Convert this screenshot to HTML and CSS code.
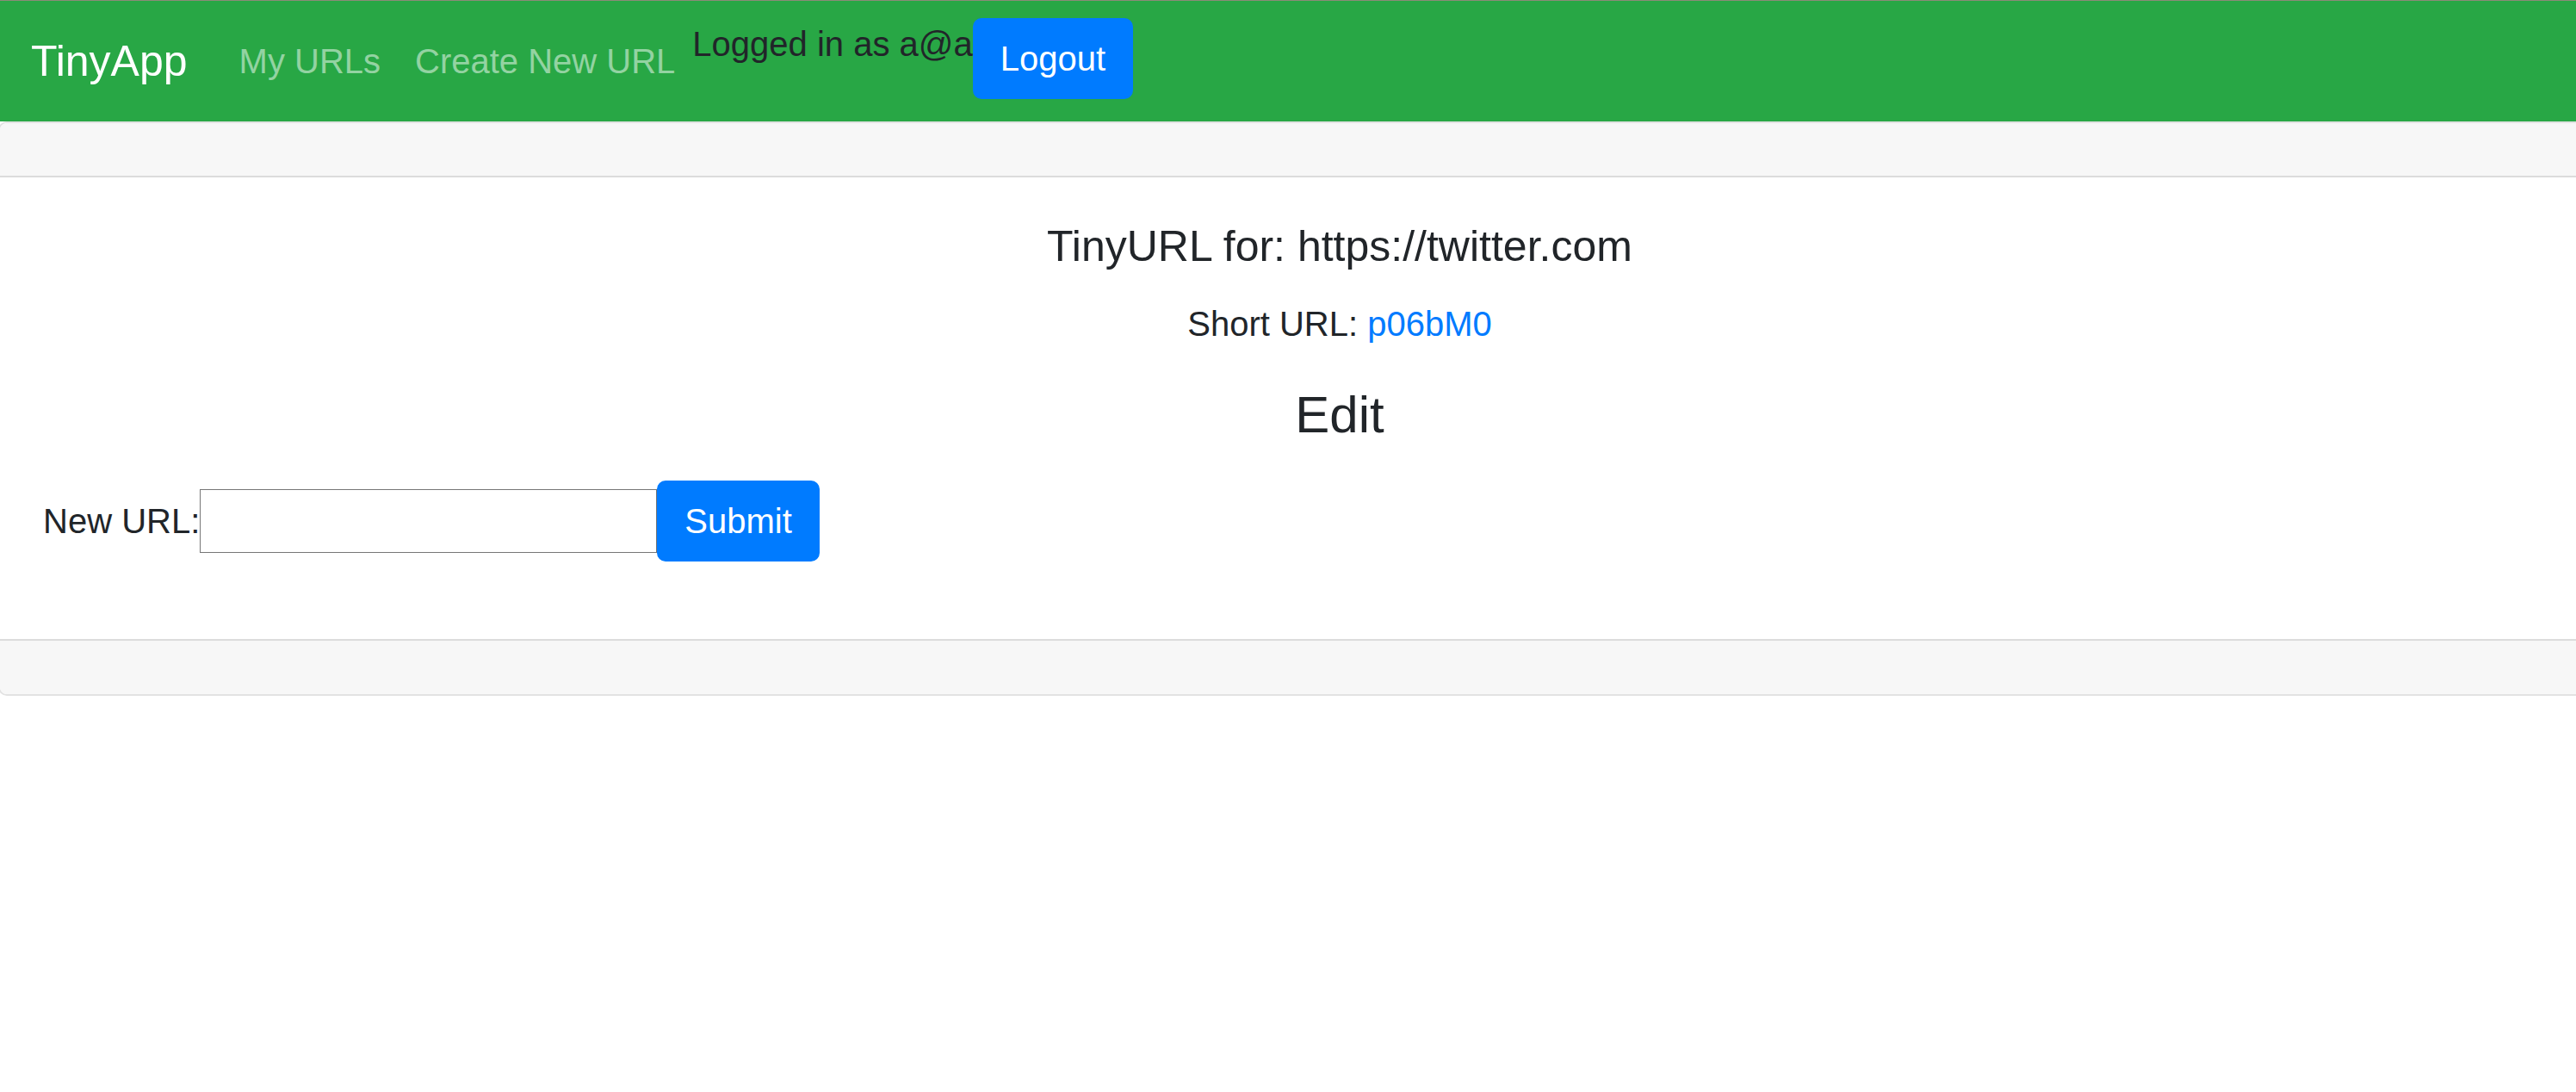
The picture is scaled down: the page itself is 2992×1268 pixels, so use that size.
FILE: index.html
```html
<!DOCTYPE html>
<html lang="en">
<head>
<meta charset="utf-8">
<title>TinyApp</title>
<link rel="stylesheet" href="styles.css">
</head>
<body>
<nav class="navbar">
  <a class="brand" href="#">TinyApp</a>
  <div class="nav-links">
    <a class="nav-link" href="#">My URLs</a>
    <a class="nav-link" href="#">Create New URL</a>
  </div>
  <div class="user">
    <span class="login">Logged in as a@a</span>
    <button class="btn" type="button">Logout</button>
  </div>
</nav>
<main class="card">
  <div class="card-header"></div>
  <div class="card-body">
    <h5 class="card-title">TinyURL for: https://twitter.com</h5>
    <p class="short">Short URL: <a class="link" href="#">p06bM0</a></p>
    <h4 class="edit-title">Edit</h4>
    <form class="edit-form">
      <label class="label" for="newurl">New URL:</label><input class="url-input" id="newurl" type="text"><button class="btn" type="button">Submit</button>
    </form>
  </div>
  <div class="card-footer"></div>
</main>
</body>
</html>
```

FILE: styles.css
```css
* { box-sizing: border-box; }
html, body { margin: 0; padding: 0; }
body {
  font-family: "Liberation Sans", Arial, sans-serif;
  font-size: 40px;
  line-height: 1.5;
  color: #212529;
  background: #fff;
  overflow-x: hidden;
}
.navbar {
  display: flex;
  align-items: center;
  height: 141px;
  padding: 20px 40px 20px 36px;
  background: #28a745;
  border-top: 1px solid #8c8a78;
}
.brand {
  font-size: 50px;
  line-height: 75px;
  padding: 12.5px 0;
  margin-right: 40px;
  color: #fff;
  text-decoration: none;
}
.nav-links { display: flex; }
.nav-link {
  padding: 20px 20px;
  line-height: 60px;
  color: rgba(255, 255, 255, 0.5);
  text-decoration: none;
}
.user {
  display: flex;
  align-items: flex-start;
  align-self: stretch;
}
.login { line-height: 60px; }
.btn {
  font-family: inherit;
  font-size: 40px;
  line-height: 60px;
  padding: 15px 30px;
  border: 2.5px solid #007bff;
  border-radius: 10px;
  background: #007bff;
  color: #fff;
  cursor: pointer;
}
.card {
  display: flex;
  flex-direction: column;
  width: 3116px;
  margin-left: -2px;
  border: 2px solid #e2e2e2;
  border-radius: 10px;
}
.card-header {
  height: 63px;
  background: #f7f7f7;
  border-bottom: 2px solid #dcdcdc;
  border-radius: 8px 8px 0 0;
}
.card-body {
  padding: 50px;
  text-align: center;
}
.card-title {
  margin: 0 0 30px;
  font-size: 50px;
  font-weight: 500;
  line-height: 1.2;
}
.short { margin: 0 0 40px; }
.link { color: #007bff; text-decoration: none; }
.edit-title {
  margin: 0 0 40px;
  font-size: 60px;
  font-weight: 500;
  line-height: 1.2;
}
.edit-form {
  display: flex;
  align-items: center;
  margin: 0 0 40px;
}
.label { line-height: 60px; }
.url-input {
  width: 531px;
  height: 74px;
  font-family: inherit;
  font-size: 40px;
  padding: 2px 5px;
  border: 1px solid #767676;
  border-radius: 0;
  background: #fff;
}
.card-footer {
  height: 64px;
  background: #f7f7f7;
  border-top: 2px solid #dcdcdc;
  border-radius: 0 0 8px 8px;
}
```
